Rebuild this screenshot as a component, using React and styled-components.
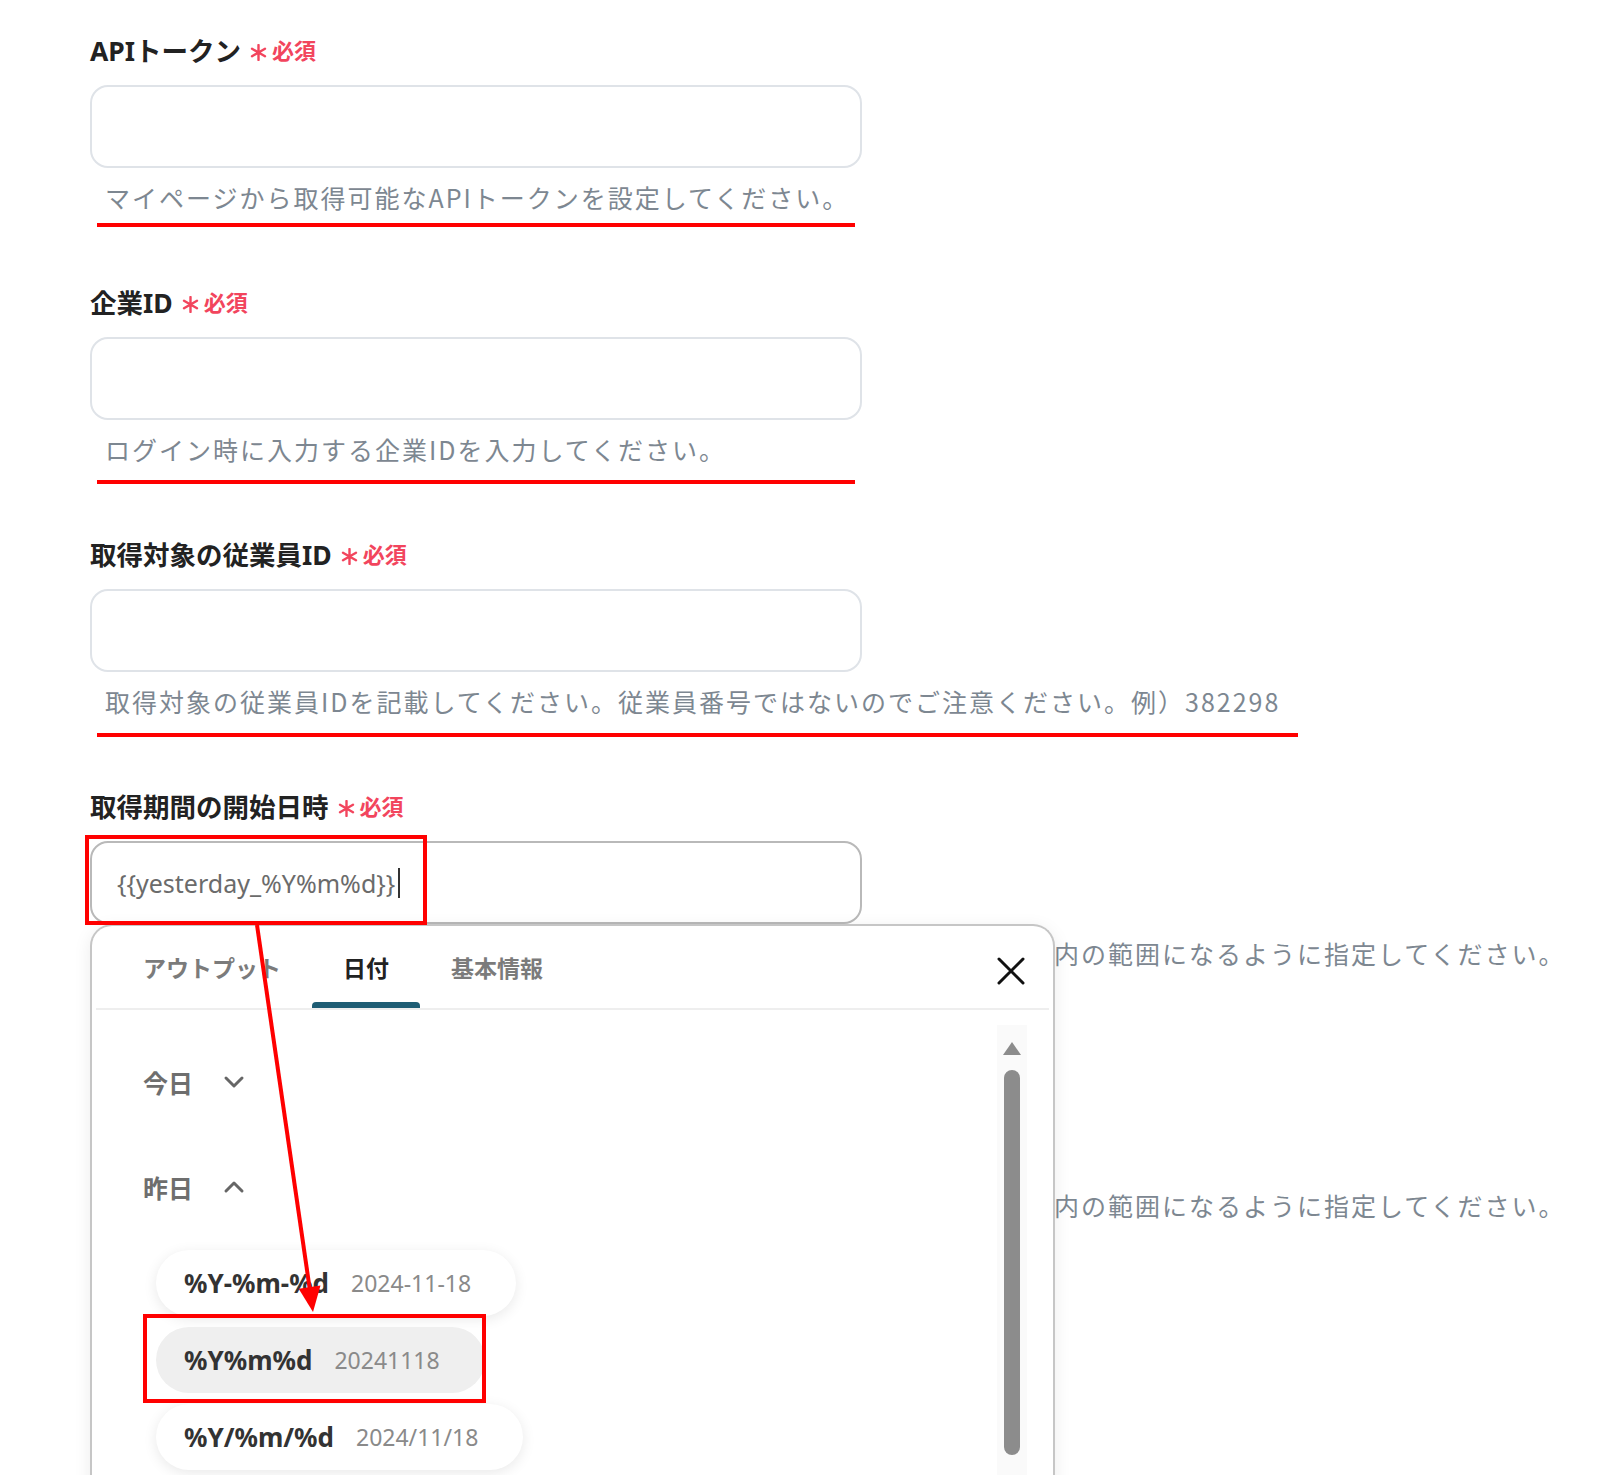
import React from 'react';
import styled, { createGlobalStyle } from 'styled-components';

const GlobalStyle = createGlobalStyle`
    html, body {
        margin: 0;
        padding: 0;
        background: #ffffff;
    }
    body {
        font-family: "Noto Sans", "Noto Sans CJK JP", sans-serif;
    }
`

// red underline width and its distance below the help text
const fields = [
    { label: 'APIトークン', help: 'マイページから取得可能なAPIトークンを設定してください。', mark: 758, markGap: 8 },
    { label: '企業ID', help: 'ログイン時に入力する企業IDを入力してください。', mark: 758, markGap: 13 },
    { label: '取得対象の従業員ID', help: '取得対象の従業員IDを記載してください。従業員番号ではないのでご注意ください。例）382298', mark: 1201, markGap: 14 },
]

const options = [
    { format: '%Y-%m-%d', sample: '2024-11-18' },
    { format: '%Y%m%d', sample: '20241118', selected: true },
    { format: '%Y/%m/%d', sample: '2024/11/18' },
]

function Chevron({ up }) {
    return (
        <svg width="22" height="14" viewBox="0 0 22 14">
            <path
                d={up ? 'M3 11 L11 3 L19 11' : 'M3 3 L11 11 L19 3'}
                fill="none"
                stroke="#666"
                strokeWidth="3"
                strokeLinecap="round"
                strokeLinejoin="round"
            />
        </svg>
    )
}

function RequiredMark() {
    return (
        <Required>
            <Star width="17" height="17" viewBox="0 0 17 17">
                <path
                    d="M8.5 1 V16 M2 4.75 L15 12.25 M15 4.75 L2 12.25"
                    stroke="#f2455d"
                    strokeWidth="2.4"
                    strokeLinecap="round"
                />
            </Star>
            <span>必須</span>
        </Required>
    )
}

function Field({ label, help, lead, mark, markGap, children }) {
    return (
        <FieldBox>
            {/* the field below the popup is hidden behind it, so its label is left empty */}
            <Label>
                {label && label}
                {label && <RequiredMark />}
            </Label>
            {children || <Input />}
            <Help>
                {lead && <Lead />}
                {help}
            </Help>
            <MarkRow $gap={markGap}>
                <Mark $width={mark} />
            </MarkRow>
        </FieldBox>
    )
}

function DatePopup() {
    return (
        <Popup>
            <TabBar>
                <Tab>アウトプット</Tab>
                <Tab $active>日付</Tab>
                <Tab>基本情報</Tab>
                <Close>
                    <svg width="28" height="28" viewBox="0 0 28 28">
                        <path d="M2 2 L26 26 M26 2 L2 26" stroke="#111" strokeWidth="3" strokeLinecap="round" />
                    </svg>
                </Close>
            </TabBar>
            <PopupBody>
                <Content>
                    <GroupHeader>
                        今日
                        <Chevron />
                    </GroupHeader>
                    <GroupHeader $second>
                        昨日
                        <Chevron up />
                    </GroupHeader>
                    <OptionList>
                        {options.map((o) => (
                            <Option key={o.format} $selected={o.selected}>
                                <Format>{o.format}</Format>
                                <Sample>{o.sample}</Sample>
                            </Option>
                        ))}
                    </OptionList>
                </Content>
                <ScrollTrack>
                    <ScrollArrow />
                    <ScrollThumb />
                </ScrollTrack>
            </PopupBody>
        </Popup>
    )
}

function App() {
    return (
        <Page>
            <GlobalStyle />
            {fields.map((f) => (
                <Field key={f.label} {...f} />
            ))}
            <Field label="取得期間の開始日時" lead help="内の範囲になるように指定してください。">
                <Input $focused>
                    {'{{yesterday_%Y%m%d}}'}
                    <Caret />
                </Input>
                <DatePopup />
            </Field>
            <Field lead help="内の範囲になるように指定してください。" />

            {/* annotations drawn on top of the screenshot */}
            <Annotations viewBox="0 0 1600 1475">
                <rect x="87" y="837" width="338" height="86" fill="none" stroke="#ff0000" strokeWidth="4" />
                <rect x="145" y="1316" width="339" height="85" fill="none" stroke="#ff0000" strokeWidth="4" />
                <line x1="257" y1="925" x2="309.6" y2="1288" stroke="#ff0000" strokeWidth="4" />
                <polygon points="313,1312 320.5,1285.6 298.7,1288.8" fill="#ff0000" />
            </Annotations>
        </Page>
    )
}

const Page = styled.div`
    position: relative;
    box-sizing: border-box;
    width: 1600px;
    height: 1475px;
    overflow: hidden;
    padding: 31px 0 0 90px;
`
const FieldBox = styled.div`
    position: relative;
    margin-bottom: 46px;
`
const Label = styled.div`
    display: flex;
    align-items: center;
    height: 36px;
    font-size: 26.5px;
    font-weight: 700;
    color: #222222;
`
const Required = styled.span`
    display: flex;
    align-items: center;
    gap: 5px;
    margin-left: 9px;
    color: #f2455d;
    font-size: 22px;
    font-weight: 700;
`
const Star = styled.svg`
    transform: translateY(3px);
`
const Input = styled.div`
    box-sizing: border-box;
    margin-top: 18px;
    width: 772px;
    height: 83px;
    display: flex;
    align-items: center;
    padding-left: 25px;
    border: 2px solid ${(p) => (p.$focused ? '#b9b9b9' : '#dfe3e8')};
    border-radius: 18px;
    background: #ffffff;
    font-size: 25px;
    color: #6b6b6b;
`
const Caret = styled.span`
    display: inline-block;
    width: 2px;
    height: 30px;
    margin-left: 3px;
    background: #333333;
`
const Help = styled.div`
    margin-top: 11px;
    height: 36px;
    line-height: 36px;
    padding-left: 15px;
    font-family: "Noto Sans CJK JP", sans-serif;
    font-size: 25px;
    letter-spacing: 2px;
    color: #7d8791;
    white-space: nowrap;
`
const Lead = styled.span`
    display: inline-block;
    width: 949px;
`
const MarkRow = styled.div`
    box-sizing: border-box;
    height: 22px;
    padding-top: ${(p) => p.$gap || 0}px;
`
const Mark = styled.div`
    margin-left: 7px;
    height: 4px;
    width: ${(p) => p.$width || 0}px;
    background: ${(p) => (p.$width ? '#ff0000' : 'transparent')};
`
const Popup = styled.div`
    position: absolute;
    top: 137px;
    left: 0;
    z-index: 2;
    box-sizing: border-box;
    width: 965px;
    height: 620px;
    display: flex;
    flex-direction: column;
    border: 2px solid #c6c6c6;
    border-bottom: none;
    border-radius: 22px 22px 0 0;
    background: #ffffff;
    box-shadow: 0 4px 18px rgba(0, 0, 0, 0.08);
`
const TabBar = styled.div`
    display: flex;
    align-items: stretch;
    height: 82px;
    margin: 0 4px;
    padding-left: 16px;
    border-bottom: 2px solid #eeeeee;
`
const Tab = styled.div`
    position: relative;
    display: flex;
    align-items: center;
    padding: 0 31px;
    font-size: 23px;
    font-weight: 700;
    color: ${(p) => (p.$active ? '#222222' : '#7b7b7b')};

    &::after {
        content: '';
        display: ${(p) => (p.$active ? 'block' : 'none')};
        position: absolute;
        left: 0;
        right: 0;
        bottom: 0;
        height: 6px;
        border-radius: 4px 4px 0 0;
        background: #1e5d74;
    }
`
const Close = styled.div`
    margin-left: auto;
    margin-right: 24px;
    margin-top: 8px;
    align-self: center;
    display: flex;
`
const PopupBody = styled.div`
    flex: 1;
    display: grid;
    grid-template-columns: 1fr 30px;
    padding-right: 26px;
`
const Content = styled.div`
    padding: 47px 0 0 51px;
`
const GroupHeader = styled.div`
    display: flex;
    align-items: center;
    gap: 30px;
    height: 50px;
    margin-top: ${(p) => (p.$second ? '55px' : '0')};
    font-size: 25px;
    font-weight: 700;
    color: #6e6e6e;
`
const OptionList = styled.div`
    display: flex;
    flex-direction: column;
    align-items: flex-start;
    gap: 11px;
    margin: 38px 0 0 13px;
`
const Option = styled.div`
    display: inline-flex;
    align-items: center;
    gap: 22px;
    height: 66px;
    padding: 0 45px 0 28px;
    border-radius: 33px;
    background: ${(p) => (p.$selected ? '#efefef' : '#ffffff')};
    box-shadow: ${(p) => (p.$selected ? 'none' : '0 3px 14px rgba(0, 0, 0, 0.09)')};
`
const Format = styled.span`
    font-size: 26px;
    font-weight: 700;
    color: #333333;
`
const Sample = styled.span`
    font-size: 23px;
    color: #8a8a8a;
`
const ScrollTrack = styled.div`
    margin-top: 15px;
    display: flex;
    flex-direction: column;
    align-items: center;
    padding-top: 17px;
    background: #fafafa;
`
const ScrollArrow = styled.div`
    width: 0;
    height: 0;
    border-left: 9px solid transparent;
    border-right: 9px solid transparent;
    border-bottom: 13px solid #8c8c8c;
`
const ScrollThumb = styled.div`
    margin-top: 15px;
    width: 16px;
    height: 385px;
    border-radius: 8px;
    background: #8c8c8c;
`
const Annotations = styled.svg`
    position: absolute;
    top: 0;
    left: 0;
    width: 1600px;
    height: 1475px;
    z-index: 5;
    pointer-events: none;
`

export default App
